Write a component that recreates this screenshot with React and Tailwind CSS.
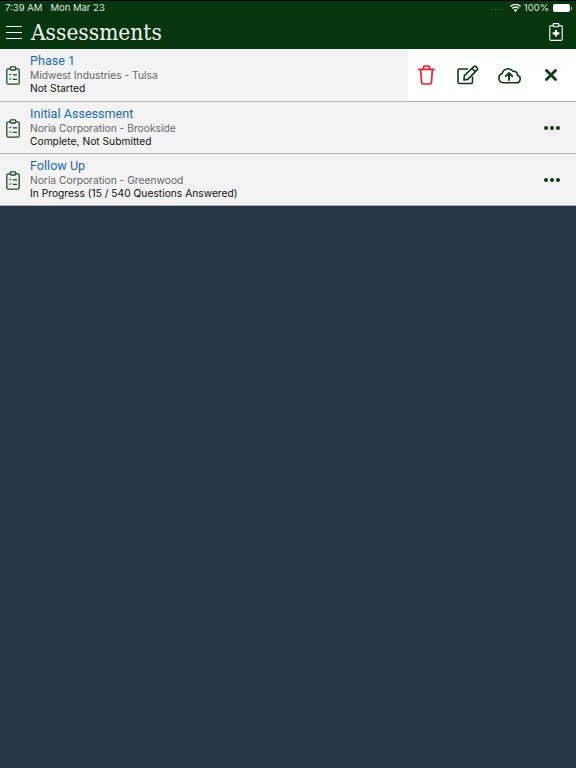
function ClipboardList() {
  return (
    <svg width="14" height="19" viewBox="0 0 14 19" fill="none" stroke="#1a4f25" strokeWidth="1.300">
      <rect x="0.800" y="2.800" width="12.400" height="15.400" rx="1.500" />
      <rect x="4.300" y="0.800" width="5.400" height="3.200" rx="0.800" fill="#f3f3f3" />
      <path d="M3 8.200l.9.900 1.400-1.600M3 12.800l.9.900 1.400-1.600" strokeWidth="1" />
      <path d="M6.800 8.800h4.200M6.800 13.400h4.200" strokeWidth="1.300" />
    </svg>
  );
}

function ClipboardPlus() {
  return (
    <svg width="14" height="18" viewBox="0 0 14 18" fill="none" stroke="#fff" strokeWidth="1.100">
      <rect x="0.800" y="2.600" width="12.400" height="14.800" rx="1.200" />
      <rect x="4.200" y="0.600" width="5.600" height="3.200" rx="0.800" fill="#06360e" />
      <path d="M7 7v6.600M3.700 10.300h6.600" strokeWidth="2.200" />
    </svg>
  );
}

function TrashIcon() {
  return (
    <svg width="17" height="20" viewBox="0 0 17 20" fill="none" stroke="#ee1c2e" strokeWidth="1.700" strokeLinejoin="round">
      <path d="M0.800 4.300h15.400" strokeLinecap="round" />
      <path d="M5.400 4V2.400A1.400 1.400 0 0 1 6.800 1h3.400a1.400 1.400 0 0 1 1.400 1.400V4" />
      <path d="M2.600 4.300l1 13.400A1.500 1.500 0 0 0 5.100 19h6.800a1.500 1.500 0 0 0 1.500-1.300l1-13.400" />
    </svg>
  );
}

function EditIcon() {
  return (
    <svg width="22" height="20" viewBox="0 0 22 20" fill="none" stroke="#0a3b12" strokeWidth="1.600">
      <path d="M15.500 11.500v5.600a1.400 1.400 0 0 1-1.400 1.400H2.400A1.400 1.400 0 0 1 1 17.100V5.400A1.400 1.400 0 0 1 2.400 4H11" />
      <path d="M7.400 10.600 16.800 1.600a1.500 1.500 0 0 1 2.100 0l1.200 1.200a1.500 1.500 0 0 1 0 2.100L10.800 14.400l-3.900.600z" strokeLinejoin="round" />
      <path d="M15 3.400l3.400 3.400" />
    </svg>
  );
}

function CloudUp() {
  return (
    <svg width="24" height="18" viewBox="0 0 24 18" fill="none" stroke="#0a3b12" strokeWidth="1.600" strokeLinejoin="round">
      <path d="M6 16.800h13.200a3.900 3.900 0 0 0 1.300-7.600 3.600 3.600 0 0 0-4.500-3.800A6 6 0 0 0 5.200 7.500 4.800 4.800 0 0 0 6 16.800z" />
      <path d="M12 14V7.200M8.800 10.200 12 7l3.200 3.200" strokeWidth="1.900" strokeLinecap="round" />
    </svg>
  );
}

function CloseIcon() {
  return (
    <svg width="12" height="12" viewBox="0 0 12 12" fill="none" stroke="#0a3b12" strokeWidth="2.800" strokeLinecap="round">
      <path d="M1.500 1.500l9 9M10.500 1.500l-9 9" />
    </svg>
  );
}

function Dots() {
  return (
    <div className="flex gap-[2px]">
      <span className="w-[4px] h-[4px] rounded-full bg-[#0a3b12]" />
      <span className="w-[4px] h-[4px] rounded-full bg-[#0a3b12]" />
      <span className="w-[4px] h-[4px] rounded-full bg-[#0a3b12]" />
    </div>
  );
}

function Row({ title, sub, status, open }) {
  return (
    <div className="flex h-[52px] first:h-[53px] bg-[#f3f3f3] border-b border-[#b3b3b3]">
      <div className="w-[30px] flex items-center justify-center pr-[4px] pt-[1px] shrink-0">
        <ClipboardList />
      </div>
      <div className="flex-1 flex flex-col pt-[3px]">
        <div className="font-['Roboto',sans-serif] text-[12.600px] leading-[17px] text-[#1c6aa8]">{title}</div>
        <div className="text-[10.250px] leading-[13px] text-[#666]">{sub}</div>
        <div className="text-[10.250px] leading-[13px] text-[#111]">{status}</div>
      </div>
      {open ? (
        <div className="w-[168px] bg-white flex items-center">
          <div className="w-[36px] flex justify-center">
            <TrashIcon />
          </div>
          <div className="w-[48px] flex justify-center">
            <EditIcon />
          </div>
          <div className="w-[34px] flex justify-center">
            <CloudUp />
          </div>
          <div className="w-[50px] flex justify-center">
            <CloseIcon />
          </div>
        </div>
      ) : (
        <div className="w-[48px] flex items-center justify-center">
          <Dots />
        </div>
      )}
    </div>
  );
}

export default function App() {
  return (
    <div className="min-h-[768px] bg-[#283747] font-['Inter',sans-serif]">
      <div className="h-[49px] bg-[#06360e] border-t border-black flex flex-col">
        <div className="h-[14px] flex items-center justify-between pl-[5px] pr-[4px] text-[9.500px] text-[#dfe6df]">
          <div className="flex gap-[8px]">
            <span>7:39 AM</span>
            <span>Mon Mar 23</span>
          </div>
          <div className="flex items-center gap-[3px]">
            <span className="text-[7px] text-[#6f8a72] tracking-[1.500px] mr-[2px]">....</span>
            <svg width="11" height="8" viewBox="0 0 11 8" fill="#fff">
              <path d="M5.500 8 3.700 5.900a2.700 2.700 0 0 1 3.600 0zM2.700 4.900l-1-1.100a5.800 5.800 0 0 1 7.600 0l-1 1.100a4.300 4.300 0 0 0-5.600 0zM.8 2.900 0 1.900a8.200 8.200 0 0 1 11 0l-.8 1a7 7 0 0 0-9.400 0z" />
            </svg>
            <span>100%</span>
            <div className="flex items-center gap-[1px] ml-[1px]">
              <div className="w-[17px] h-[8px] rounded-[2px] bg-white" />
              <div className="w-[1px] h-[3px] bg-[#b8c4b9]" />
            </div>
          </div>
        </div>
        <div className="flex-1 flex items-center justify-between pl-[6px] pr-[13px]">
          <div className="flex items-center gap-[9px]">
            <div className="flex flex-col gap-[5px]">
              <span className="block w-[16px] h-[1px] bg-white" />
              <span className="block w-[16px] h-[1px] bg-white" />
              <span className="block w-[16px] h-[1px] bg-white" />
            </div>
            <span className="font-['DejaVu_Serif_Condensed','DejaVu_Serif',serif] text-[22.500px] leading-none text-[#f4f6f4]">Assessments</span>
          </div>
          <ClipboardPlus />
        </div>
      </div>
      <div>
        <Row title="Phase 1" sub="Midwest Industries - Tulsa" status="Not Started" open />
        <Row title="Initial Assessment" sub="Noria Corporation - Brookside" status="Complete, Not Submitted" />
        <Row title="Follow Up" sub="Noria Corporation - Greenwood" status="In Progress (15 / 540 Questions Answered)" />
      </div>
    </div>
  );
}
